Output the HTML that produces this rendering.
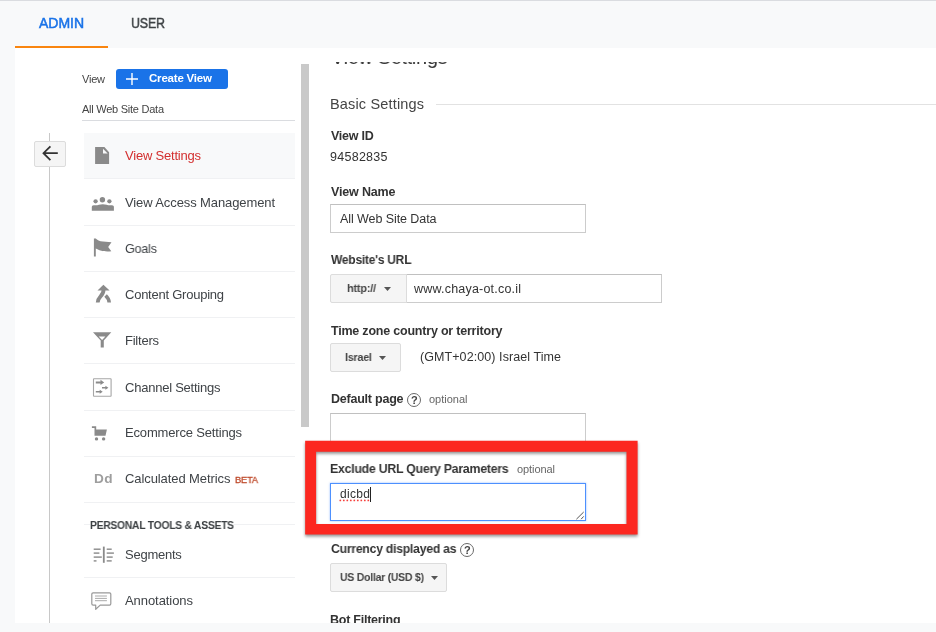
<!DOCTYPE html>
<html><head><meta charset="utf-8"><title>Admin</title>
<style>
html,body{margin:0;padding:0}
body{width:936px;height:632px;overflow:hidden;position:relative;background:#f8f9fa;font-family:"Liberation Sans",sans-serif}
.a{position:absolute}
.t{position:absolute;white-space:nowrap;line-height:1;display:block;will-change:transform}
#panel{left:15px;top:48px;width:921px;height:575px;background:#fff}
#topline{left:0;top:0;width:936px;height:1px;background:#dadce0}
#orange{left:15px;top:45.7px;width:93px;height:2.3px;background:#f9850f}
.hl{height:1px;background:#f0f1f3;left:84px;width:211px}
.btn{background:#f5f5f5;border:1px solid #dcdcdc;border-radius:2px;box-sizing:border-box}
.inp{background:#fff;border:1px solid #ccc;box-sizing:border-box;border-top-color:#c0c0c0}
svg{position:absolute;overflow:visible}
.hc{width:14px;height:14px;border:1.300px solid #6a6a6a;border-radius:50%;box-sizing:border-box}
.q{font-size:11px;font-weight:700;color:#444}
#admin{left:39px;top:16.00px;font-size:14px;font-weight:400;color:#1a73e8;letter-spacing:-0.031px;transform:scaleX(1.0000);transform-origin:0 0;-webkit-text-stroke:0.5px #1a73e8;}
#user{left:131px;top:16.00px;font-size:14px;font-weight:400;color:#3c4043;letter-spacing:-0.250px;transform:scaleX(0.8911);transform-origin:0 0;-webkit-text-stroke:0.45px #3c4043;}
#viewlbl{left:82px;top:74.00px;font-size:11px;font-weight:400;color:#444;letter-spacing:-0.219px;transform:scaleX(1.0000);transform-origin:0 0;}
#create{left:149px;top:73.00px;font-size:11.5px;font-weight:700;color:#fff;letter-spacing:-0.200px;transform:scaleX(1.0000);transform-origin:0 0;}
#awsd{left:82px;top:104.00px;font-size:11px;font-weight:400;color:#444;letter-spacing:-0.250px;transform:scaleX(0.9998);transform-origin:0 0;}
#m1{left:125px;top:149.00px;font-size:13px;font-weight:400;color:#d32f2f;letter-spacing:-0.211px;transform:scaleX(1.0000);transform-origin:0 0;}
#m2{left:125px;top:196.00px;font-size:13px;font-weight:400;color:#3f4347;letter-spacing:-0.106px;transform:scaleX(1.0000);transform-origin:0 0;}
#m3{left:125px;top:242.00px;font-size:13px;font-weight:400;color:#3f4347;letter-spacing:-0.250px;transform:scaleX(0.9706);transform-origin:0 0;}
#m4{left:125px;top:288.00px;font-size:13px;font-weight:400;color:#3f4347;letter-spacing:-0.242px;transform:scaleX(1.0000);transform-origin:0 0;}
#m5{left:125px;top:334.00px;font-size:13px;font-weight:400;color:#3f4347;letter-spacing:-0.232px;transform:scaleX(1.0000);transform-origin:0 0;}
#m6{left:125px;top:381.00px;font-size:13px;font-weight:400;color:#3f4347;letter-spacing:-0.234px;transform:scaleX(1.0000);transform-origin:0 0;}
#m7{left:125px;top:426.00px;font-size:13px;font-weight:400;color:#3f4347;letter-spacing:-0.173px;transform:scaleX(1.0000);transform-origin:0 0;}
#m8{left:125px;top:472.00px;font-size:13px;font-weight:400;color:#3f4347;letter-spacing:-0.085px;transform:scaleX(1.0000);transform-origin:0 0;}
#beta{left:234.5px;top:475.00px;font-size:9.5px;font-weight:400;color:#bf4a2b;letter-spacing:-0.250px;transform:scaleX(0.9846);transform-origin:0 0;-webkit-text-stroke:0.3px #bf4a2b;}
#dd{left:93.5px;top:473.00px;font-size:12.5px;font-weight:700;color:#9e9e9e;letter-spacing:0.300px;transform:scaleX(1.0900);transform-origin:0 0;}
#pta{left:90px;top:520.00px;font-size:10.5px;font-weight:700;color:#3c4043;letter-spacing:-0.250px;transform:scaleX(0.9823);transform-origin:0 0;background:#fff;}
#m9{left:125px;top:548.00px;font-size:13px;font-weight:400;color:#3f4347;letter-spacing:-0.250px;transform:scaleX(0.9948);transform-origin:0 0;}
#m10{left:125px;top:594.00px;font-size:13px;font-weight:400;color:#3f4347;letter-spacing:-0.067px;transform:scaleX(1.0000);transform-origin:0 0;}
#title{left:330.5px;top:47.00px;font-size:20px;font-weight:400;color:#333;letter-spacing:-0.250px;transform:scaleX(0.9889);transform-origin:0 0;clip-path:inset(15.6px -5px -5px -5px);}
#basic{left:330px;top:97.00px;font-size:14.5px;font-weight:400;color:#444;letter-spacing:0.162px;transform:scaleX(1.0000);transform-origin:0 0;}
#vid{left:330.5px;top:130.00px;font-size:12.5px;font-weight:700;color:#333;letter-spacing:-0.250px;transform:scaleX(0.9945);transform-origin:0 0;}
#vidv{left:330px;top:151.00px;font-size:12.5px;font-weight:400;color:#333;letter-spacing:0.268px;transform:scaleX(1.0000);transform-origin:0 0;}
#vname{left:330.5px;top:186.00px;font-size:12.5px;font-weight:700;color:#333;letter-spacing:-0.160px;transform:scaleX(1.0000);transform-origin:0 0;}
#vnamev{left:339.5px;top:213.00px;font-size:12.5px;font-weight:400;color:#333;letter-spacing:-0.077px;transform:scaleX(1.0000);transform-origin:0 0;}
#wurl{left:330.5px;top:254.00px;font-size:12.5px;font-weight:700;color:#333;letter-spacing:-0.250px;transform:scaleX(0.9607);transform-origin:0 0;}
#proto{left:347px;top:283.00px;font-size:11.5px;font-weight:700;color:#444;letter-spacing:-0.250px;transform:scaleX(0.9528);transform-origin:0 0;}
#urlv{left:414px;top:283.00px;font-size:12.5px;font-weight:400;color:#333;letter-spacing:0.205px;transform:scaleX(1.0000);transform-origin:0 0;}
#tz{left:330.5px;top:325.00px;font-size:12.5px;font-weight:700;color:#333;letter-spacing:-0.210px;transform:scaleX(1.0000);transform-origin:0 0;}
#israel{left:345px;top:352.00px;font-size:11.5px;font-weight:700;color:#444;letter-spacing:-0.250px;transform:scaleX(0.9371);transform-origin:0 0;}
#gmt{left:420px;top:351.00px;font-size:12.5px;font-weight:400;color:#333;letter-spacing:0.078px;transform:scaleX(1.0000);transform-origin:0 0;}
#dp{left:330.5px;top:393.00px;font-size:12.5px;font-weight:700;color:#333;letter-spacing:-0.229px;transform:scaleX(1.0000);transform-origin:0 0;}
#opt1{left:428.5px;top:394.00px;font-size:11px;font-weight:400;color:#666;letter-spacing:-0.007px;transform:scaleX(1.0000);transform-origin:0 0;}
#ex{left:329.8px;top:463.00px;font-size:12.5px;font-weight:700;color:#333;letter-spacing:-0.250px;transform:scaleX(0.9856);transform-origin:0 0;}
#opt2{left:517px;top:464.00px;font-size:11px;font-weight:400;color:#666;letter-spacing:-0.078px;transform:scaleX(1.0000);transform-origin:0 0;}
#dic{left:339.7px;top:488.00px;font-size:12px;font-weight:400;color:#333;letter-spacing:0.300px;transform:scaleX(1.0004);transform-origin:0 0;}
#cur{left:330.5px;top:543.00px;font-size:12.5px;font-weight:700;color:#333;letter-spacing:-0.250px;transform:scaleX(0.9774);transform-origin:0 0;}
#usd{left:339.5px;top:572.00px;font-size:11.5px;font-weight:700;color:#444;letter-spacing:-0.250px;transform:scaleX(0.9081);transform-origin:0 0;}
#bot{left:329.8px;top:614.00px;font-size:12.5px;font-weight:700;color:#333;letter-spacing:-0.250px;transform:scaleX(0.9942);transform-origin:0 0;}
</style></head><body>
<div class="a" id="topline"></div>
<div class="a" id="panel"></div>
<div class="a" id="orange"></div>

<!-- sidebar -->
<div class="a" style="left:82px;top:120px;width:213px;height:1px;background:#dadce0"></div>
<div class="a" style="left:49px;top:133px;width:1.2px;height:490px;background:#c8c8c8"></div>
<div class="a btn" style="left:34px;top:141px;width:31.5px;height:26px;"></div>
<svg style="left:0;top:0" width="936" height="632" viewBox="0 0 936 632"><path d="M57.8 153.2H43.6M50.4 146.3L43.5 153.2L50.4 160.1" stroke="#333" stroke-width="1.8" fill="none" stroke-linecap="butt" stroke-linejoin="miter"/></svg>
<div class="a" style="left:84px;top:133px;width:211px;height:45.4px;background:#f8f9fa"></div>
<div class="a" style="left:116px;top:69px;width:112.300px;height:20.400px;background:#1a73e8;border-radius:3px"></div>
<svg style="left:126px;top:72.700px" width="12" height="12" viewBox="0 0 12 12"><path d="M5.300 0h1.400v5.300H12v1.400H6.700V12H5.300V6.700H0V5.300h5.300z" fill="#fff"/></svg>

<div class="a hl" style="top:178.4px"></div>
<div class="a hl" style="top:225px"></div>
<div class="a hl" style="top:271px"></div>
<div class="a hl" style="top:317px"></div>
<div class="a hl" style="top:363px"></div>
<div class="a hl" style="top:410px"></div>
<div class="a hl" style="top:456px"></div>
<div class="a hl" style="top:502px"></div>
<div class="a hl" style="top:524px"></div>
<div class="a hl" style="top:577px"></div>

<svg style="left:0;top:0" width="936" height="632" viewBox="0 0 936 632">
<g fill="#8a8a8a">
<!-- doc -->
<path fill-rule="evenodd" d="M95.100 147.100H104.400L109.100 152.300V164H95.100ZM103 148.800V153.500H107.700Z"/>
<!-- people -->
<circle cx="102.400" cy="199.700" r="2.700"/><circle cx="95.600" cy="201.300" r="2.150"/><circle cx="109.400" cy="201.300" r="2.150"/>
<path d="M91.8 210.7V207C91.8 205.6 93 205.3 95.6 205.3C98 205.300 99.800 204.200 102.800 204.200C105.800 204.200 107.500 205.300 110 205.300C112.700 205.300 113.900 205.600 113.900 207V210.700Z"/>
<!-- flag -->
<path d="M93.900 238.400H95.800C97 240 99.500 241.200 103 241.600L111.500 242.200L108.200 247L111.300 251.200C107 251.600 103 251.400 99.500 250.200C98 249.600 96.800 249 95.800 248.600V256.400H93.900Z"/>
<!-- merge -->
<path d="M103.400 284.700L109.600 290.400H97.500Z"/>
<!-- funnel -->
<path fill-rule="evenodd" d="M93 332.200H111.300L103.800 340.500V347.600H100.700V340.500ZM98.700 336.500H105.400L102.100 339.900Z"/>
<!-- channel arrows -->
<path d="M95.800 381.400H100.500V379.800L104.200 382.400L100.500 385V383.400H95.800Z"/>
<path d="M102 387.100H105.400V385.800L108.400 387.800L105.400 389.800V388.500H102Z"/>
<path d="M95.800 391H99.700V389.700L102.700 391.700L99.700 393.700V392.400H95.800Z"/>
<!-- cart -->
<path d="M91.900 426.300H96.200V429.400H106.900L105.500 435.800H94.500V428H91.900Z"/>
<circle cx="96.500" cy="438.900" r="1.700"/><circle cx="103.600" cy="438.900" r="1.700"/>
<!-- segments -->
<rect x="102.900" y="546.600" width="1.800" height="16.200"/>
<rect x="93.700" y="548.500" width="6.900" height="1.400"/><rect x="93.700" y="552.400" width="5.700" height="1.400"/><rect x="93.700" y="556.400" width="8.100" height="1.400"/><rect x="93.700" y="560.200" width="2.800" height="1.400"/>
<rect x="106.700" y="548.500" width="5" height="1.400"/><rect x="106.700" y="552.400" width="7.200" height="1.400"/><rect x="106.700" y="556.400" width="6" height="1.400"/><rect x="106.700" y="560.200" width="5" height="1.400"/>
</g>
<g fill="none" stroke="#8a8a8a">
<path d="M103.600 289.500C103.600 296.500 97.700 296.500 97.700 302.500" stroke-width="3.800"/>
<path d="M105.600 295.600C108 298 109.200 299.500 109.200 302.500" stroke-width="3.600"/>
<rect x="93.500" y="378.700" width="17.600" height="17.600" stroke="#a6a6a6" stroke-width="1.100" rx="0.500"/>
<path d="M93.100 592.800H109.500A1.300 1.300 0 0 1 110.800 594.100V603.800A1.300 1.300 0 0 1 109.500 605.100H100.200L95.700 609.300V605.100H93.100A1.300 1.300 0 0 1 91.800 603.800V594.100A1.300 1.300 0 0 1 93.100 592.800Z" stroke="#999" stroke-width="1.200" stroke-linejoin="round"/>
<path d="M95 596H106.900M95 598.400H106.900M95 600.700H106.900" stroke="#aaa" stroke-width="1"/>
</g>
</svg>

<!-- scrollbar -->
<div class="a" style="left:301px;top:63.500px;width:8px;height:363.500px;background:#c9c9c9"></div>

<!-- main -->
<div class="a" style="left:436px;top:104px;width:500px;height:1px;background:#e2e2e2"></div>

<div class="a inp" style="left:330px;top:204px;width:256px;height:29px"></div>
<div class="a inp" style="left:406px;top:274px;width:256px;height:29px"></div>
<div class="a btn" style="left:330px;top:274px;width:77px;height:29px;border-radius:2px 0 0 2px"></div>
<div class="a btn" style="left:330px;top:343px;width:71px;height:29px"></div>
<div class="a inp" style="left:330px;top:413px;width:256px;height:29px"></div>
<div class="a btn" style="left:330px;top:563px;width:117px;height:29px"></div>
<!-- carets -->
<svg style="left:383.800px;top:286.500px" width="7" height="4" viewBox="0 0 7 4"><path d="M0 0h7L3.500 4z" fill="#555"/></svg>
<svg style="left:379.200px;top:355.500px" width="7" height="4" viewBox="0 0 7 4"><path d="M0 0h7L3.500 4z" fill="#555"/></svg>
<svg style="left:431.200px;top:576px" width="7" height="4" viewBox="0 0 7 4"><path d="M0 0h7L3.500 4z" fill="#555"/></svg>

<!-- help circles -->
<div class="a hc" style="left:407px;top:393px"></div>
<div class="a hc" style="left:460.3px;top:543.3px"></div>
<span class="t q" style="left:411.1px;top:394.7px">?</span>
<span class="t q" style="left:464.4px;top:545px">?</span>

<!-- textarea -->
<div class="a" style="left:330px;top:483px;width:256px;height:38px;background:#fff;border:1px solid #4d90fe;box-sizing:border-box;box-shadow:0 0 2px rgba(77,144,254,.6)"></div>
<div class="a" style="left:369.9px;top:486.5px;width:1px;height:15px;background:#222"></div>
<svg style="left:0;top:0" width="936" height="632" viewBox="0 0 936 632"><g fill="#f5413d"><circle cx="340.30" cy="500.4" r="0.9"/><circle cx="343.80" cy="500.4" r="0.9"/><circle cx="347.30" cy="500.4" r="0.9"/><circle cx="350.80" cy="500.4" r="0.9"/><circle cx="354.30" cy="500.4" r="0.9"/><circle cx="357.80" cy="500.4" r="0.9"/><circle cx="361.30" cy="500.4" r="0.9"/><circle cx="364.80" cy="500.4" r="0.9"/><circle cx="368.30" cy="500.4" r="0.9"/></g></svg>
<svg style="left:0;top:0" width="936" height="632" viewBox="0 0 936 632"><path d="M576.400 519.200L583.700 512M581.100 519.200L583.700 516.400" stroke="#555" stroke-width="1" fill="none"/></svg>

<!-- red highlight box -->
<svg style="left:0;top:0;filter:drop-shadow(0.5px 2px 1.6px rgba(0,0,0,.42))" width="936" height="632" viewBox="0 0 936 632"><path fill="#fc2720" fill-rule="evenodd" d="M305.15 440.8H637.6V534.6H305.15ZM316.1 451.7V523.9H626.5V451.7Z"/></svg>

<span class="t" id="admin">ADMIN</span>
<span class="t" id="user">USER</span>
<span class="t" id="viewlbl">View</span>
<span class="t" id="create">Create View</span>
<span class="t" id="awsd">All Web Site Data</span>
<span class="t" id="m1">View Settings</span>
<span class="t" id="m2">View Access Management</span>
<span class="t" id="m3">Goals</span>
<span class="t" id="m4">Content Grouping</span>
<span class="t" id="m5">Filters</span>
<span class="t" id="m6">Channel Settings</span>
<span class="t" id="m7">Ecommerce Settings</span>
<span class="t" id="m8">Calculated Metrics</span>
<span class="t" id="beta">BETA</span>
<span class="t" id="dd">Dd</span>
<span class="t" id="pta">PERSONAL TOOLS &amp; ASSETS</span>
<span class="t" id="m9">Segments</span>
<span class="t" id="m10">Annotations</span>
<span class="t" id="title">View Settings</span>
<span class="t" id="basic">Basic Settings</span>
<span class="t" id="vid">View ID</span>
<span class="t" id="vidv">94582835</span>
<span class="t" id="vname">View Name</span>
<span class="t" id="vnamev">All Web Site Data</span>
<span class="t" id="wurl">Website's URL</span>
<span class="t" id="proto">http://</span>
<span class="t" id="urlv">www.chaya-ot.co.il</span>
<span class="t" id="tz">Time zone country or territory</span>
<span class="t" id="israel">Israel</span>
<span class="t" id="gmt">(GMT+02:00) Israel Time</span>
<span class="t" id="dp">Default page</span>
<span class="t" id="opt1">optional</span>
<span class="t" id="ex">Exclude URL Query Parameters</span>
<span class="t" id="opt2">optional</span>
<span class="t" id="dic">dicbd</span>
<span class="t" id="cur">Currency displayed as</span>
<span class="t" id="usd">US Dollar (USD $)</span>
<span class="t" id="bot">Bot Filtering</span>
<div class="a" style="left:0;top:623px;width:936px;height:9px;background:#f8f9fa"></div>
</body></html>
